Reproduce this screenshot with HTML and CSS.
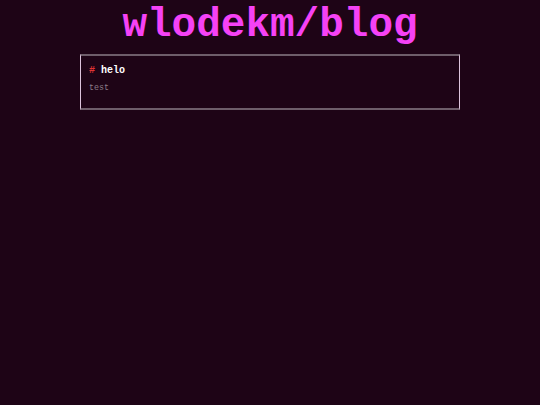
FILE: index.html
```html
<!DOCTYPE html>
<html>
<head>
<meta charset="utf-8">
<link rel="stylesheet" href="styles.css">
</head>
<body>
<h1 class="site-title">wlodekm/blog</h1>
<div class="posts">
  <div class="post">
    <div class="post-title"><span class="hash">#</span> helo</div>
    <div class="post-body">test</div>
  </div>
</div>
</body>
</html>
```
FILE: styles.css
```css
html, body {
  margin: 0;
  padding: 0;
  background: #1e0416;
  font-family: "Courier New", "Nimbus Mono PS", "FreeMono", "Liberation Mono", monospace;
}
* {
  box-sizing: border-box;
}
.site-title {
  margin: 0;
  padding-top: 2px;
  height: 54px;
  font-size: 41px;
  line-height: 46px;
  font-weight: bold;
  color: #f542f5;
  text-align: center;
}
.posts {
  display: flex;
  justify-content: center;
}
.post {
  width: 380px;
  height: 56px;
  padding: 9px 4px 0 8px;
  border-top: 2px solid #6e5e6a;
  border-bottom: 2px solid #6e5e6a;
  border-left: 1px solid #dcc4dc;
  border-right: 1px solid #dcc4dc;
}
.post-title {
  font-size: 10px;
  line-height: 12px;
  font-weight: bold;
  color: #ffffff;
}
.hash {
  color: #e03434;
}
.post-body {
  margin-top: 6px;
  font-size: 8.3px;
  line-height: 10px;
  color: #8c7c88;
}
```
